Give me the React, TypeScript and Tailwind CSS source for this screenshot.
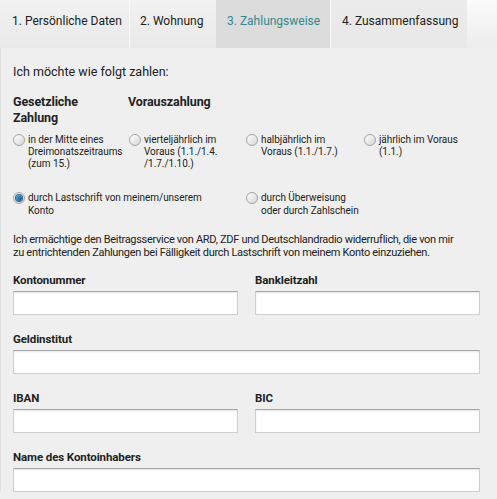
import React from "react";

const font = { fontFamily: 'Roboto, "Liberation Sans", sans-serif' };

function Radio({ checked = false }: { checked?: boolean }) {
  return (
    <span className="relative inline-block h-[12px] w-[12px] shrink-0 rounded-full border border-[#a3a3a3] bg-gradient-to-br from-[#ffffff] to-[#d6d6d6]">
      {checked && (
        <span className="absolute left-[2px] top-[2px] h-[6px] w-[6px] rounded-full bg-gradient-to-br from-[#4fa6de] to-[#134f82] shadow-[0_0_0_1px_#2a5f8c]" />
      )}
    </span>
  );
}

function RadioOpt({
  checked,
  lines,
  className,
  lh,
  rh,
}: {
  checked?: boolean;
  lines: string[];
  className?: string;
  lh: string;
  rh: string;
}) {
  return (
    <div className={"flex items-start gap-[3px] " + (className ?? "")}>
      <div className={"flex shrink-0 items-center " + rh}>
        <Radio checked={checked} />
      </div>
      <div className={"whitespace-nowrap text-[10px] tracking-[-0.05px] text-[#222] " + lh}>
        {lines.map((l, i) => (
          <div key={i}>{l}</div>
        ))}
      </div>
    </div>
  );
}

function Field({ label, className }: { label: string; className?: string }) {
  return (
    <div className={"flex flex-col " + (className ?? "")}>
      <div className="text-[11.5px] font-bold leading-[14px] tracking-[-0.1px] text-[#222]">{label}</div>
      <div className="mt-[4px] h-[24px] border border-[#cfcfcf] border-t-[#a5a5a5] bg-white shadow-[inset_0_1px_2px_rgba(0,0,0,0.10)]" />
    </div>
  );
}

export default function App() {
  return (
    <div style={font} className="h-[499px] w-[497px] overflow-hidden bg-[#efefef] text-[#222]">
      <div className="flex h-[48px] whitespace-nowrap text-[12px] leading-[16px]">
        <div className="w-[130px] border-r border-[#f9f9f9] bg-gradient-to-b from-[#f2f2f2] to-[#e9e9e9] pl-[12px] pt-[13px]">
          1. Persönliche Daten
        </div>
        <div className="w-[86px] bg-gradient-to-b from-[#f2f2f2] to-[#e9e9e9] pl-[10px] pt-[13px]">2. Wohnung</div>
        <div className="w-[114px] bg-[#dcdcdc] pl-[11px] pt-[13px] text-[#2f8a8e]">3. Zahlungsweise</div>
        <div className="w-[137px] border-l border-[#f9f9f9] bg-gradient-to-b from-[#ebebeb] to-[#e8e8e8] pl-[11px] pt-[13px]">
          4. Zusammenfassung
        </div>
        <div className="flex-1 bg-gradient-to-b from-[#fbfbfb] to-[#ececec]" />
      </div>

      <div className="border-l border-[#e0e0e0] pl-[12px] pr-[17px] pt-[16px]">
        <div className="text-[12.5px] leading-[16px]">Ich möchte wie folgt zahlen:</div>

        <div className="mt-[14px] flex text-[12.5px] font-bold leading-[16px] tracking-[-0.1px]">
          <div className="w-[115px]">
            Gesetzliche
            <br />
            Zahlung
          </div>
          <div>Vorauszahlung</div>
        </div>

        <div className="mt-[8px] flex">
          <RadioOpt lh="leading-[12px]" rh="h-[12px]" className="w-[116px]" lines={["in der Mitte eines", "Dreimonatszeitraums", "(zum 15.)"]} />
          <RadioOpt lh="leading-[12px]" rh="h-[12px]" className="w-[117px]" lines={["vierteljährlich im", "Voraus (1.1./1.4.", "/1.7./1.10.)"]} />
          <RadioOpt lh="leading-[12px]" rh="h-[12px]" className="w-[118px]" lines={["halbjährlich im", "Voraus (1.1./1.7.)"]} />
          <RadioOpt lh="leading-[12px]" rh="h-[12px]" lines={["jährlich im Voraus", "(1.1.)"]} />
        </div>

        <div className="mt-[21px] flex">
          <RadioOpt lh="leading-[13px]" rh="h-[13px]" className="w-[233px]" checked lines={["durch Lastschrift von meinem/unserem", "Konto"]} />
          <RadioOpt lh="leading-[13px]" rh="h-[13px]" lines={["durch Überweisung", "oder durch Zahlschein"]} />
        </div>

        <div className="mt-[16px] text-[11px] leading-[13px] tracking-[-0.3px]">
          Ich ermächtige den Beitragsservice von ARD, ZDF und Deutschlandradio widerruflich, die von mir
          <br />
          zu entrichtenden Zahlungen bei Fälligkeit durch Lastschrift von meinem Konto einzuziehen.
        </div>

        <div className="mt-[14px] grid grid-cols-2 gap-x-[17px]">
          <Field label="Kontonummer" />
          <Field label="Bankleitzahl" />
        </div>
        <Field label="Geldinstitut" className="mt-[17px]" />
        <div className="mt-[17px] grid grid-cols-2 gap-x-[17px]">
          <Field label="IBAN" />
          <Field label="BIC" />
        </div>
        <Field label="Name des Kontoinhabers" className="mt-[17px]" />
      </div>
    </div>
  );
}
